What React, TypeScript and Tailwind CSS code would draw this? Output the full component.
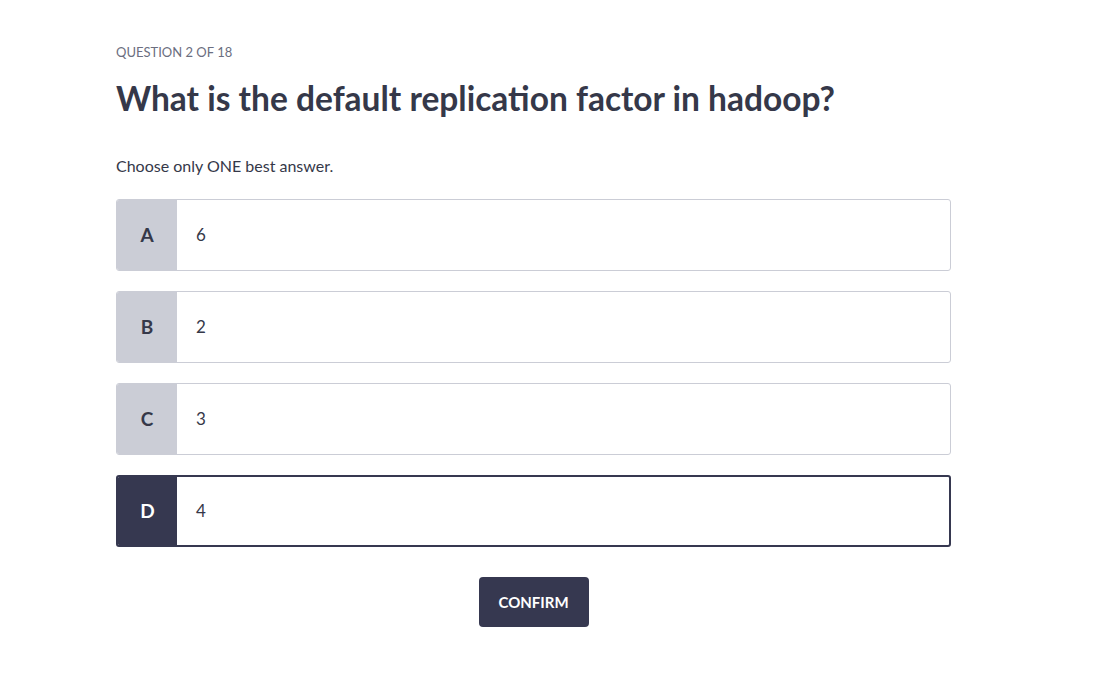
import { useState } from "react";

const options = [
  { key: "A", text: "6" },
  { key: "B", text: "2" },
  { key: "C", text: "3" },
  { key: "D", text: "4" },
];

const App = () => {
  const [selected, setSelected] = useState("D");

  return (
    <div className="min-h-screen bg-white font-['Lato',sans-serif] text-[#353849]">
      <div className="ml-[116px] w-[835px] pt-[42px]">
        <p className="text-[13px] leading-5 uppercase text-[#6b6e80]">Question 2 of 18</p>
        <h1 className="mt-[16px] text-[33.5px] leading-10 font-bold">
          What is the default replication factor in hadoop?
        </h1>

        <p className="mt-[36px] text-[16px] leading-6">Choose only ONE best answer.</p>

        <div className="mt-[21px] flex flex-col gap-5">
          {options.map((opt) => {
            const active = selected === opt.key;
            return (
              <button
                key={opt.key}
                onClick={() => setSelected(opt.key)}
                className={
                  active
                    ? "flex h-[72px] w-full overflow-hidden rounded-[3px] border-2 border-[#363850] text-left"
                    : "flex h-[72px] w-full overflow-hidden rounded-[3px] border border-[#cbcdd6] text-left"
                }
              >
                <span
                  className={
                    active
                      ? "flex w-[59px] shrink-0 items-center justify-center bg-[#363850] text-[19px] font-bold text-white"
                      : "flex w-[60px] shrink-0 items-center justify-center bg-[#cbcdd6] text-[19px] font-bold text-[#353849]"
                  }
                >
                  {opt.key}
                </span>
                <span className={active ? "flex items-center pl-[19px] text-[17px]" : "flex items-center pl-[19px] text-[17px]"}>
                  {opt.text}
                </span>
              </button>
            );
          })}
        </div>

        <div className="mt-[30px] flex justify-center">
          <button className="h-[50px] w-[110px] rounded-[4px] bg-[#363850] text-[15px] font-bold uppercase text-white">
            Confirm
          </button>
        </div>
      </div>
    </div>
  );
};

export default App;
